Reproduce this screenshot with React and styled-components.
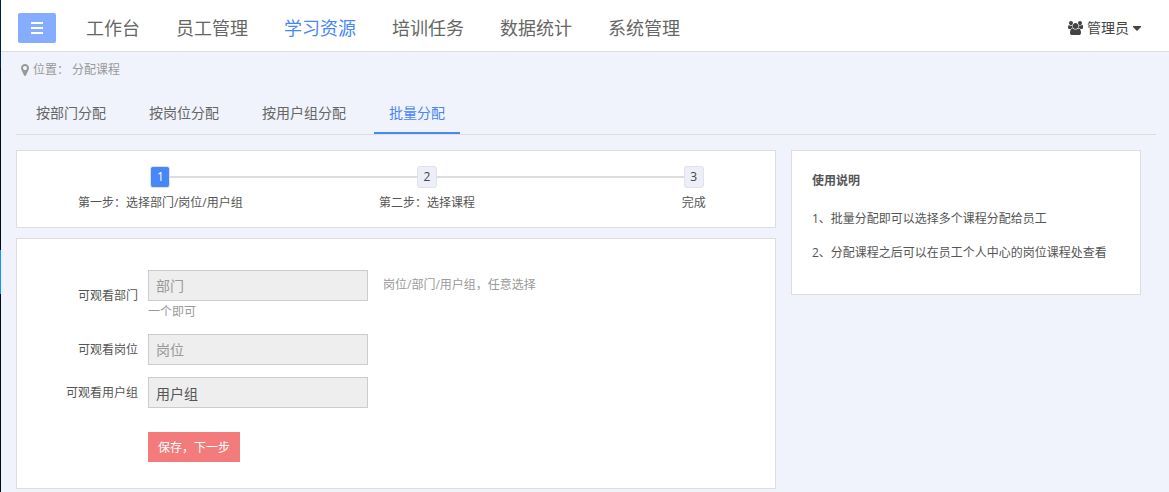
import React from 'react'
import styled, { createGlobalStyle } from 'styled-components'

const GlobalStyle = createGlobalStyle`
    *, *::before, *::after {
        box-sizing: border-box;
    }
    body {
        margin: 0;
        background: #f0f3fb;
        color: #555;
        font-family: 'Open Sans', 'Noto Sans CJK SC', sans-serif;
        font-size: 12px;
        line-height: 18px;
    }
    input, button {
        font-family: inherit;
    }
    ul, ol, p, h2 {
        margin: 0;
        padding: 0;
        list-style: none;
    }
`
const Layout = styled.div`
    display: flex;
    min-height: 100vh;
`
const Rail = styled.div`
    display: flex;
    flex-direction: column;
    flex: none;
    width: 1px;
    background: #000c17;
`
const RailHead = styled.div`
    height: 68px;
    background: #002140;
`
const RailActive = styled.div`
    height: 44px;
    margin-top: 182px;
    background: #1890ff;
`
const Page = styled.div`
    flex: 1;
    min-width: 0;
`
const Header = styled.header`
    display: flex;
    align-items: center;
    padding: 5px 28px 0 17px;
    height: 52px;
    background: #fff;
    border-bottom: 1px solid #ddd;
`
const MenuButton = styled.button`
    display: flex;
    align-items: center;
    justify-content: center;
    width: 38px;
    height: 30px;
    padding: 0;
    border: 0;
    border-radius: 2px;
    background: #85acff;
    color: #fff;
`
const Nav = styled.nav`
    display: flex;
    flex: 1;
    gap: 36px;
    margin-left: 30px;
`
const NavLink = styled.a`
    color: ${(props) => (props.$active ? '#4787f8' : '#666')};
    font-size: 18px;
    line-height: 28px;
    text-decoration: none;
    white-space: nowrap;
`
const UserButton = styled.button`
    display: flex;
    align-items: center;
    gap: 4px;
    padding: 0;
    border: 0;
    background: none;
    color: #444;
    font-size: 14px;
    line-height: 28px;
`
const Breadcrumb = styled.div`
    display: flex;
    align-items: center;
    gap: 4px;
    padding-left: 20px;
    color: #999;
    line-height: 36px;
`
const Tabs = styled.nav`
    display: flex;
    gap: 13px;
    margin: 6px 13px 0 15px;
    padding-left: 5px;
    border-bottom: 1px solid #ddd;
`
const Tab = styled.a`
    padding: 0 15px;
    border-bottom: 2px solid ${(props) => (props.$active ? '#4787f8' : 'transparent')};
    color: ${(props) => (props.$active ? '#4787f8' : '#666')};
    font-size: 14px;
    line-height: 38px;
    text-decoration: none;
`
const Content = styled.div`
    display: flex;
    align-items: flex-start;
    gap: 15px;
    padding: 15px 28px 3px 15px;
`
const Main = styled.main`
    display: flex;
    flex: 1;
    flex-direction: column;
    gap: 10px;
    min-width: 0;
`
const Panel = styled.section`
    border: 1px solid #ddd;
    background: #fff;
`
const Steps = styled.ol`
    display: grid;
    grid-template-columns: repeat(3, 1fr);
    margin: 0 -52px 0 10px;
    padding: 15px 0;
`
const StepItem = styled.li`
    text-align: center;
`
const StepTrack = styled.div`
    display: flex;
    align-items: center;
    margin-bottom: 6px;
`
const Line = styled.span`
    flex: 1;
    height: 2px;
    background: ${(props) => (props.$hidden ? 'transparent' : '#ddd')};
`
const Badge = styled.span`
    width: 20px;
    height: 22px;
    border: 1px solid #e0e2e8;
    border-radius: 3px;
    background: ${(props) => (props.$active ? '#4787f8' : '#eceff8')};
    color: ${(props) => (props.$active ? '#fff' : '#444')};
    line-height: 20px;
`
const Form = styled.form`
    display: flex;
    flex-direction: column;
    gap: 12px;
    padding: 31px 0 26px;
`
const Row = styled.div`
    display: grid;
    grid-template-columns: 121px minmax(0, 396px);
    align-items: center;
    column-gap: 10px;
`
const Label = styled.label`
    text-align: right;
`
const Field = styled.div`
    color: #999;
    line-height: 21px;
`
const Input = styled.input`
    width: 220px;
    height: 31px;
    padding: 0 7px;
    border: 1px solid #ccc;
    border-radius: 0;
    background: #eee;
    color: #555;
    font-size: 14px;
    vertical-align: middle;

    &::placeholder {
        color: #999;
        opacity: 1;
    }
`
const Hint = styled.span`
    margin-left: 15px;
`
const Submit = styled.button`
    justify-self: start;
    grid-column: 2;
    height: 30px;
    margin-top: 12px;
    padding: 0 10px;
    border: 0;
    background: #f37b7b;
    color: #fff;
    font-size: 12px;
`
const Aside = styled(Panel).attrs({ as: 'aside' })`
    flex: none;
    width: 350px;
    padding: 21px 20px 24px;
`
const AsideTitle = styled.h2`
    margin-bottom: 12px;
    font-size: 12px;
    line-height: 18px;
`
const AsideText = styled.p`
    line-height: 34px;
`

const BarsIcon = () => (
    <svg width="12" height="12" viewBox="0 0 12 12" fill="currentColor" aria-hidden="true">
        <path d="M0 0h12v2H0zM0 5h12v2H0zM0 10h12v2H0z" />
    </svg>
)
const MarkerIcon = () => (
    <svg width="8" height="14" viewBox="0 0 1024 1792" fill="currentColor" aria-hidden="true">
        <path d="M768 640q0-106-75-181t-181-75-181 75-75 181 75 181 181 75 181-75 75-181zm256 0q0 109-33 179l-364 774q-16 33-47.5 52t-67.5 19-67.5-19-46.5-52l-365-774q-33-70-33-179 0-212 150-362t362-150 362 150 150 362z" />
    </svg>
)
const UsersIcon = () => (
    <svg width="15" height="14" viewBox="0 0 1920 1792" fill="currentColor" aria-hidden="true">
        <path d="M593 896q-162 5-265 128h-134q-82 0-138-40.5t-56-118.5q0-353 124-353 6 0 43.5 21t97.5 42.5 119 21.5q67 0 133-23-5 37-5 66 0 159 97 288zm1071 637q0 120-73 189.5t-194 69.5h-874q-121 0-194-69.5t-73-189.5q0-53 3.5-103.5t14-109 26.5-108.5 43-97.5 62-81 85.5-53.5 111.5-20q10 0 43 21.5t73 48 107 48 135 21.5 135-21.5 107-48 73-48 43-21.5q61 0 111.5 20t85.5 53.5 62 81 43 97.5 26.5 108.5 14 109 3.5 103.5zm-1024-1277q0 106-75 181t-181 75-181-75-75-181 75-181 181-75 181 75 75 181zm704 384q0 159-112.5 271.5t-271.5 112.5-271.5-112.5-112.5-271.5 112.5-271.5 271.5-112.5 271.5 112.5 112.5 271.5zm576 225q0 78-56 118.5t-138 40.5h-134q-103-123-265-128 97-129 97-288 0-29-5-66 66 23 133 23 59 0 119-21.5t97.5-42.5 43.5-21q124 0 124 353zm-128-609q0 106-75 181t-181 75-181-75-75-181 75-181 181-75 181 75 75 181z" />
    </svg>
)
const CaretIcon = () => (
    <svg width="8" height="5" viewBox="0 0 8 5" fill="currentColor" aria-hidden="true">
        <path d="M0 0h8v1L4 5 0 1z" />
    </svg>
)

const nav_items = ['工作台', '员工管理', '学习资源', '培训任务', '数据统计', '系统管理']
const tab_items = ['按部门分配', '按岗位分配', '按用户组分配', '批量分配']
const step_items = ['第一步：选择部门/岗位/用户组', '第二步：选择课程', '完成']

const App = () => (
    <>
        <GlobalStyle />
        <Layout>
            <Rail>
                <RailHead />
                <RailActive />
            </Rail>
            <Page>
                <Header>
                    <MenuButton type="button" aria-label="菜单">
                        <BarsIcon />
                    </MenuButton>
                    <Nav>
                        {nav_items.map((item) => (
                            <NavLink key={item} href="#" $active={item === '学习资源'}>
                                {item}
                            </NavLink>
                        ))}
                    </Nav>
                    <UserButton type="button">
                        <UsersIcon />
                        管理员
                        <CaretIcon />
                    </UserButton>
                </Header>
                <Breadcrumb>
                    <MarkerIcon />
                    <span>位置： 分配课程</span>
                </Breadcrumb>
                <Tabs>
                    {tab_items.map((item) => (
                        <Tab key={item} href="#" $active={item === '批量分配'}>
                            {item}
                        </Tab>
                    ))}
                </Tabs>
                <Content>
                    <Main>
                        <Panel>
                            <Steps>
                                {step_items.map((item, index) => (
                                    <StepItem key={item}>
                                        <StepTrack>
                                            <Line $hidden={index === 0} />
                                            <Badge $active={index === 0}>{index + 1}</Badge>
                                            <Line $hidden={index === step_items.length - 1} />
                                        </StepTrack>
                                        {item}
                                    </StepItem>
                                ))}
                            </Steps>
                        </Panel>
                        <Panel>
                            <Form onSubmit={(e) => e.preventDefault()}>
                                <Row>
                                    <Label htmlFor="department">可观看部门</Label>
                                    <Field>
                                        <Input id="department" placeholder="部门" readOnly />
                                        <Hint>岗位/部门/用户组，任意选择一个即可</Hint>
                                    </Field>
                                </Row>
                                <Row>
                                    <Label htmlFor="post">可观看岗位</Label>
                                    <Field>
                                        <Input id="post" placeholder="岗位" readOnly />
                                    </Field>
                                </Row>
                                <Row>
                                    <Label htmlFor="group">可观看用户组</Label>
                                    <Field>
                                        <Input id="group" defaultValue="用户组" readOnly />
                                    </Field>
                                </Row>
                                <Row>
                                    <Submit type="submit">保存，下一步</Submit>
                                </Row>
                            </Form>
                        </Panel>
                    </Main>
                    <Aside>
                        <AsideTitle>使用说明</AsideTitle>
                        <AsideText>1、批量分配即可以选择多个课程分配给员工</AsideText>
                        <AsideText>2、分配课程之后可以在员工个人中心的岗位课程处查看</AsideText>
                    </Aside>
                </Content>
            </Page>
        </Layout>
    </>
)

export default App
